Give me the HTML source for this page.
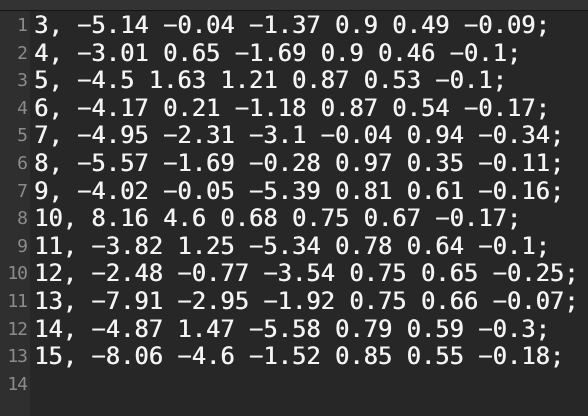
<html><head><style>
body{margin:0;width:588px;height:416px;background:#272727;overflow:hidden;position:relative}
.top{position:absolute;left:0;top:0;width:588px;height:10px;background:#333}
.topl{position:absolute;left:0;top:10px;width:588px;height:1px;background:#141414}
.gut{position:absolute;left:0;top:11px;width:30px;height:405px;background:#2f2f2f}
.ln{position:absolute;left:0;top:12px;width:27px;text-align:right;font:18px/27.6px "DejaVu Sans Mono",monospace;color:#8c8c8c;letter-spacing:-1px}
.code{position:absolute;left:34px;top:12px;font:23.8px/27.6px "DejaVu Sans Mono",monospace;color:#f4f4f4;white-space:pre;text-shadow:0.5px 0 0 #f4f4f4}
</style></head><body>
<div class="top"></div><div class="topl"></div><div class="gut"></div>
<div class="ln">1<br>2<br>3<br>4<br>5<br>6<br>7<br>8<br>9<br>10<br>11<br>12<br>13<br>14</div>
<div class="code">3, −5.14 −0.04 −1.37 0.9 0.49 −0.09;
4, −3.01 0.65 −1.69 0.9 0.46 −0.1;
5, −4.5 1.63 1.21 0.87 0.53 −0.1;
6, −4.17 0.21 −1.18 0.87 0.54 −0.17;
7, −4.95 −2.31 −3.1 −0.04 0.94 −0.34;
8, −5.57 −1.69 −0.28 0.97 0.35 −0.11;
9, −4.02 −0.05 −5.39 0.81 0.61 −0.16;
10, 8.16 4.6 0.68 0.75 0.67 −0.17;
11, −3.82 1.25 −5.34 0.78 0.64 −0.1;
12, −2.48 −0.77 −3.54 0.75 0.65 −0.25;
13, −7.91 −2.95 −1.92 0.75 0.66 −0.07;
14, −4.87 1.47 −5.58 0.79 0.59 −0.3;
15, −8.06 −4.6 −1.52 0.85 0.55 −0.18;
</div>
</body></html>
